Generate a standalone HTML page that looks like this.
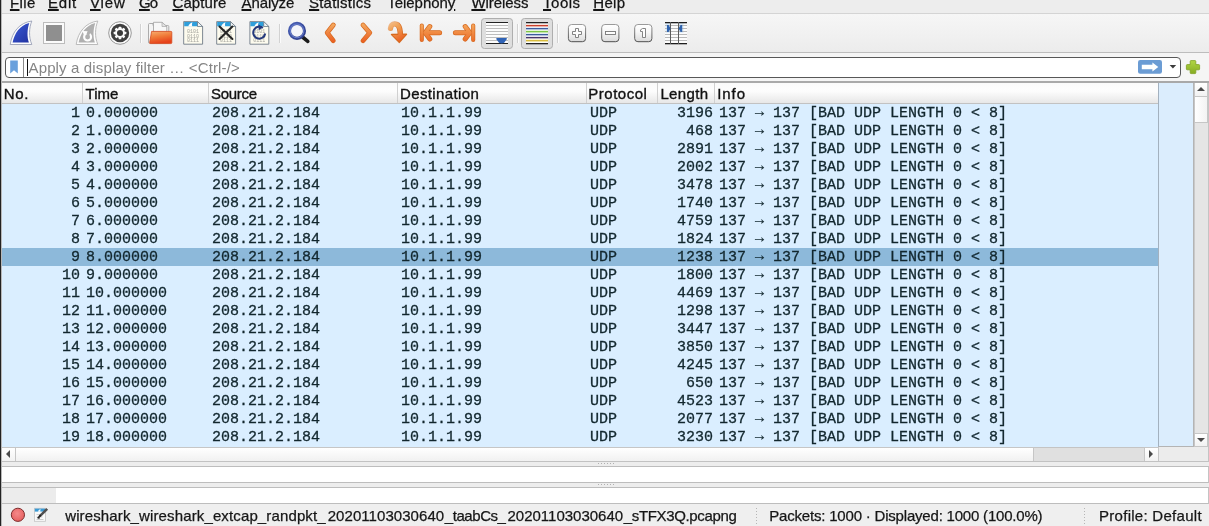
<!DOCTYPE html><html><head><meta charset="utf-8"><title>Wireshark</title><style>
*{box-sizing:border-box;margin:0;padding:0}
html,body{width:1209px;height:526px;overflow:hidden;background:#efefef}
body{position:relative;font-family:"Liberation Sans","DejaVu Sans",sans-serif;color:#1a1a1a}
.abs{position:absolute}
#wrap{position:absolute;left:0;top:0;width:1209px;height:526px;will-change:transform}
#lb{left:0;top:0;width:2px;height:526px;background:#b8b8b8;border-left:1px solid #222}
#menubar{left:2px;top:0;width:1207px;height:13px;background:#ededed;overflow:hidden}
#menuline{left:2px;top:13px;width:1207px;height:1px;background:#d4d4d4}
.mi{position:absolute;top:-6px;font-size:15px;line-height:18px;white-space:nowrap;color:#141414;-webkit-text-stroke:0.25px #141414}
.mi u{text-decoration:underline;text-decoration-thickness:1.6px;text-underline-offset:1.4px}
#toolbar{left:2px;top:14px;width:1207px;height:38px;background:linear-gradient(#f6f6f6,#ececec)}
#tbline{left:2px;top:52px;width:1207px;height:1px;background:#bdbdbd}
#filterarea{left:2px;top:53px;width:1207px;height:28px;background:#f5f5f5}
#filter{left:5px;top:57px;width:1176px;height:21px;background:#fff;border:1px solid #585858;border-radius:4px}
#fdiv{left:23px;top:58px;width:1px;height:19px;background:#8a8a8a}
#cursor{left:27px;top:59px;width:1px;height:17px;background:#111}
#ph{top:57px;height:21px;line-height:21px;font-size:15px;color:#858585;white-space:nowrap}
#tabletop{left:2px;top:81px;width:1207px;height:2px;background:#a9a9a9}
#header{left:2px;top:83px;width:1157px;height:20px;background:linear-gradient(#fafafa 0%,#fdfdfd 40%,#e7e7e7 100%)}
#headline{left:2px;top:103px;width:1157px;height:1px;background:#c2c2c2}
.hc{position:absolute;top:84px;height:20px;line-height:20px;font-size:15px;color:#111;white-space:nowrap;-webkit-text-stroke:0.35px #111}
.hd{position:absolute;top:83px;width:1px;height:20px;background:#d0d0d0}
#rows{left:2px;top:104px;width:1157px;height:343px;background:#daeeff}
.row{position:absolute;left:0;width:1157px;height:18px;font-family:"Liberation Mono","DejaVu Sans Mono",monospace;font-size:15px;line-height:18px;color:#12272e;white-space:pre;-webkit-text-stroke:0.3px #12272e}
.row.sel{background:#8db9da}
.row span{position:absolute;top:1px}
.row i{font-style:normal;position:relative;top:-1px}

#mini{left:1158px;top:83px;width:36px;height:364px;background:#dbedfd;border-left:1px solid #a3b1bf;border-right:1px solid #b4b4b4;border-bottom:1px solid #b4b4b4}
#vsb{left:1194px;top:83px;width:14px;height:364px;background:#e5e5e5;border-left:1px solid #c9c9c9}
#vsbr{left:1208px;top:83px;width:1px;height:379px;background:#c4c4c4}
#vup{left:1194px;top:83px;width:14px;height:14px;background:linear-gradient(#ffffff,#f2f2f2);border:1px solid #c6c6c6;border-top:none}
#vhandle{left:1194px;top:96px;width:14px;height:27px;background:linear-gradient(90deg,#ffffff,#f3f3f3);border:1px solid #c6c6c6}
#vdown{left:1194px;top:433px;width:14px;height:14px;background:linear-gradient(#ffffff,#f2f2f2);border:1px solid #c6c6c6}
.tri{position:absolute;width:0;height:0}
#rowsline{left:2px;top:447px;width:1157px;height:1px;background:#c4c4c4}
#hsb{left:2px;top:448px;width:1157px;height:13px;background:#e0e0e0}
#hleft{left:2px;top:447px;width:14px;height:15px;background:linear-gradient(#ffffff,#f2f2f2);border:1px solid #c6c6c6;border-left:none}
#hhandle{left:15px;top:447px;width:1019px;height:15px;background:linear-gradient(#ffffff,#f1f1f1);border:1px solid #c6c6c6}
#hright{left:1144px;top:447px;width:15px;height:15px;background:linear-gradient(#ffffff,#f2f2f2);border:1px solid #c6c6c6}
#corner{left:1159px;top:447px;width:49px;height:14px;background:#ececec}
#l461{left:2px;top:461px;width:1207px;height:1px;background:#c2c2c2}
#gap1{left:2px;top:462px;width:1207px;height:4px;background:#ededed}
#pane2{left:2px;top:466px;width:1207px;height:17px;background:#fff;border-top:1px solid #bdbdbd;border-bottom:1px solid #bdbdbd;border-right:1px solid #c4c4c4}
#gap2{left:2px;top:483px;width:1207px;height:4px;background:#ededed}
#pane3{left:2px;top:487px;width:1207px;height:17px;background:#fff;border-top:1px solid #bdbdbd;border-bottom:1px solid #bdbdbd;border-right:1px solid #c4c4c4}
#pane3g{left:2px;top:488px;width:54px;height:15px;background:#ececec}
.dots{position:absolute;width:16px;height:1px;left:598px;background:repeating-linear-gradient(90deg,#b0b0b0 0,#b0b0b0 1px,transparent 1px,transparent 3px)}
#status{left:2px;top:504px;width:1207px;height:22px;background:#efefef}
.st{position:absolute;top:505px;height:22px;line-height:22px;font-size:15px;color:#161616;white-space:nowrap;-webkit-text-stroke:0.25px #161616}
.vdot{position:absolute;top:508px;width:1px;height:16px;background:repeating-linear-gradient(180deg,#b5b5b5 0,#b5b5b5 1px,transparent 1px,transparent 3px)}
</style></head><body><div id="wrap">
<div id="lb" class="abs"></div>
<div id="menubar" class="abs">
<div class="mi" style="left:7.90px;letter-spacing:0.424px"><u>F</u>ile</div>
<div class="mi" style="left:46.00px;letter-spacing:0.773px"><u>E</u>dit</div>
<div class="mi" style="left:88.00px;letter-spacing:0.864px"><u>V</u>iew</div>
<div class="mi" style="left:137.00px;letter-spacing:-0.867px"><u>G</u>o</div>
<div class="mi" style="left:170.50px;letter-spacing:0.080px"><u>C</u>apture</div>
<div class="mi" style="left:239.50px;letter-spacing:-0.087px"><u>A</u>nalyze</div>
<div class="mi" style="left:307.00px;letter-spacing:0.209px"><u>S</u>tatistics</div>
<div class="mi" style="left:385.30px;letter-spacing:-0.048px">Telephon<u>y</u></div>
<div class="mi" style="left:469.40px;letter-spacing:-0.057px"><u>W</u>ireless</div>
<div class="mi" style="left:541.00px;letter-spacing:0.521px"><u>T</u>ools</div>
<div class="mi" style="left:591.20px;letter-spacing:0.364px"><u>H</u>elp</div>
</div><div id="menuline" class="abs"></div>
<div id="toolbar" class="abs"></div><div id="tbline" class="abs"></div>
<!--ICONS-->
<div id="filterarea" class="abs"></div><div id="filter" class="abs"></div><div id="fdiv" class="abs"></div><div id="cursor" class="abs"></div>
<div id="ph" class="abs" style="left:28.50px;letter-spacing:0.141px">Apply a display filter … &lt;Ctrl-/&gt;</div>
<!--FILTERICONS-->
<div id="tabletop" class="abs"></div><div id="header" class="abs"></div><div id="headline" class="abs"></div>
<div class="hc" style="left:3.80px;letter-spacing:0.663px">No.</div>
<div class="hc" style="left:85.60px;letter-spacing:-0.045px">Time</div>
<div class="hc" style="left:211.00px;letter-spacing:-0.277px">Source</div>
<div class="hc" style="left:400.00px;letter-spacing:0.370px">Destination</div>
<div class="hc" style="left:588.30px;letter-spacing:0.501px">Protocol</div>
<div class="hc" style="left:660.40px;letter-spacing:0.353px">Length</div>
<div class="hc" style="left:717.30px;letter-spacing:0.908px">Info</div>
<div class="hd" style="left:82px"></div>
<div class="hd" style="left:208px"></div>
<div class="hd" style="left:397px"></div>
<div class="hd" style="left:586px"></div>
<div class="hd" style="left:657px"></div>
<div class="hd" style="left:714px"></div>
<div id="rows" class="abs">
<div class="row" style="top:0px"><span style="right:1079px">1</span><span style="left:84px">0.000000</span><span style="left:210px">208.21.2.184</span><span style="left:399px">10.1.1.99</span><span style="left:588px">UDP</span><span style="right:446px">3196</span><span style="left:717px">137 <i>→</i> 137 [BAD UDP LENGTH 0 &lt; 8]</span></div>
<div class="row" style="top:18px"><span style="right:1079px">2</span><span style="left:84px">1.000000</span><span style="left:210px">208.21.2.184</span><span style="left:399px">10.1.1.99</span><span style="left:588px">UDP</span><span style="right:446px">468</span><span style="left:717px">137 <i>→</i> 137 [BAD UDP LENGTH 0 &lt; 8]</span></div>
<div class="row" style="top:36px"><span style="right:1079px">3</span><span style="left:84px">2.000000</span><span style="left:210px">208.21.2.184</span><span style="left:399px">10.1.1.99</span><span style="left:588px">UDP</span><span style="right:446px">2891</span><span style="left:717px">137 <i>→</i> 137 [BAD UDP LENGTH 0 &lt; 8]</span></div>
<div class="row" style="top:54px"><span style="right:1079px">4</span><span style="left:84px">3.000000</span><span style="left:210px">208.21.2.184</span><span style="left:399px">10.1.1.99</span><span style="left:588px">UDP</span><span style="right:446px">2002</span><span style="left:717px">137 <i>→</i> 137 [BAD UDP LENGTH 0 &lt; 8]</span></div>
<div class="row" style="top:72px"><span style="right:1079px">5</span><span style="left:84px">4.000000</span><span style="left:210px">208.21.2.184</span><span style="left:399px">10.1.1.99</span><span style="left:588px">UDP</span><span style="right:446px">3478</span><span style="left:717px">137 <i>→</i> 137 [BAD UDP LENGTH 0 &lt; 8]</span></div>
<div class="row" style="top:90px"><span style="right:1079px">6</span><span style="left:84px">5.000000</span><span style="left:210px">208.21.2.184</span><span style="left:399px">10.1.1.99</span><span style="left:588px">UDP</span><span style="right:446px">1740</span><span style="left:717px">137 <i>→</i> 137 [BAD UDP LENGTH 0 &lt; 8]</span></div>
<div class="row" style="top:108px"><span style="right:1079px">7</span><span style="left:84px">6.000000</span><span style="left:210px">208.21.2.184</span><span style="left:399px">10.1.1.99</span><span style="left:588px">UDP</span><span style="right:446px">4759</span><span style="left:717px">137 <i>→</i> 137 [BAD UDP LENGTH 0 &lt; 8]</span></div>
<div class="row" style="top:126px"><span style="right:1079px">8</span><span style="left:84px">7.000000</span><span style="left:210px">208.21.2.184</span><span style="left:399px">10.1.1.99</span><span style="left:588px">UDP</span><span style="right:446px">1824</span><span style="left:717px">137 <i>→</i> 137 [BAD UDP LENGTH 0 &lt; 8]</span></div>
<div class="row sel" style="top:144px"><span style="right:1079px">9</span><span style="left:84px">8.000000</span><span style="left:210px">208.21.2.184</span><span style="left:399px">10.1.1.99</span><span style="left:588px">UDP</span><span style="right:446px">1238</span><span style="left:717px">137 <i>→</i> 137 [BAD UDP LENGTH 0 &lt; 8]</span></div>
<div class="row" style="top:162px"><span style="right:1079px">10</span><span style="left:84px">9.000000</span><span style="left:210px">208.21.2.184</span><span style="left:399px">10.1.1.99</span><span style="left:588px">UDP</span><span style="right:446px">1800</span><span style="left:717px">137 <i>→</i> 137 [BAD UDP LENGTH 0 &lt; 8]</span></div>
<div class="row" style="top:180px"><span style="right:1079px">11</span><span style="left:84px">10.000000</span><span style="left:210px">208.21.2.184</span><span style="left:399px">10.1.1.99</span><span style="left:588px">UDP</span><span style="right:446px">4469</span><span style="left:717px">137 <i>→</i> 137 [BAD UDP LENGTH 0 &lt; 8]</span></div>
<div class="row" style="top:198px"><span style="right:1079px">12</span><span style="left:84px">11.000000</span><span style="left:210px">208.21.2.184</span><span style="left:399px">10.1.1.99</span><span style="left:588px">UDP</span><span style="right:446px">1298</span><span style="left:717px">137 <i>→</i> 137 [BAD UDP LENGTH 0 &lt; 8]</span></div>
<div class="row" style="top:216px"><span style="right:1079px">13</span><span style="left:84px">12.000000</span><span style="left:210px">208.21.2.184</span><span style="left:399px">10.1.1.99</span><span style="left:588px">UDP</span><span style="right:446px">3447</span><span style="left:717px">137 <i>→</i> 137 [BAD UDP LENGTH 0 &lt; 8]</span></div>
<div class="row" style="top:234px"><span style="right:1079px">14</span><span style="left:84px">13.000000</span><span style="left:210px">208.21.2.184</span><span style="left:399px">10.1.1.99</span><span style="left:588px">UDP</span><span style="right:446px">3850</span><span style="left:717px">137 <i>→</i> 137 [BAD UDP LENGTH 0 &lt; 8]</span></div>
<div class="row" style="top:252px"><span style="right:1079px">15</span><span style="left:84px">14.000000</span><span style="left:210px">208.21.2.184</span><span style="left:399px">10.1.1.99</span><span style="left:588px">UDP</span><span style="right:446px">4245</span><span style="left:717px">137 <i>→</i> 137 [BAD UDP LENGTH 0 &lt; 8]</span></div>
<div class="row" style="top:270px"><span style="right:1079px">16</span><span style="left:84px">15.000000</span><span style="left:210px">208.21.2.184</span><span style="left:399px">10.1.1.99</span><span style="left:588px">UDP</span><span style="right:446px">650</span><span style="left:717px">137 <i>→</i> 137 [BAD UDP LENGTH 0 &lt; 8]</span></div>
<div class="row" style="top:288px"><span style="right:1079px">17</span><span style="left:84px">16.000000</span><span style="left:210px">208.21.2.184</span><span style="left:399px">10.1.1.99</span><span style="left:588px">UDP</span><span style="right:446px">4523</span><span style="left:717px">137 <i>→</i> 137 [BAD UDP LENGTH 0 &lt; 8]</span></div>
<div class="row" style="top:306px"><span style="right:1079px">18</span><span style="left:84px">17.000000</span><span style="left:210px">208.21.2.184</span><span style="left:399px">10.1.1.99</span><span style="left:588px">UDP</span><span style="right:446px">2077</span><span style="left:717px">137 <i>→</i> 137 [BAD UDP LENGTH 0 &lt; 8]</span></div>
<div class="row" style="top:324px"><span style="right:1079px">19</span><span style="left:84px">18.000000</span><span style="left:210px">208.21.2.184</span><span style="left:399px">10.1.1.99</span><span style="left:588px">UDP</span><span style="right:446px">3230</span><span style="left:717px">137 <i>→</i> 137 [BAD UDP LENGTH 0 &lt; 8]</span></div>
</div>

<div id="mini" class="abs"></div>
<div id="vsb" class="abs"></div><div id="vsbr" class="abs"></div>
<div id="vup" class="abs"></div><div id="vhandle" class="abs"></div><div id="vdown" class="abs"></div>
<div class="tri" style="left:1197px;top:87px;border-left:4px solid transparent;border-right:4px solid transparent;border-bottom:4px solid #4a4a4a"></div>
<div class="tri" style="left:1197px;top:438px;border-left:4px solid transparent;border-right:4px solid transparent;border-top:4px solid #4a4a4a"></div>
<div id="rowsline" class="abs"></div>
<div id="hsb" class="abs"></div><div id="hhandle" class="abs"></div><div id="hleft" class="abs"></div><div id="hright" class="abs"></div>
<div class="tri" style="left:6px;top:450px;border-top:4px solid transparent;border-bottom:4px solid transparent;border-right:4px solid #4a4a4a"></div>
<div class="tri" style="left:1149px;top:450px;border-top:4px solid transparent;border-bottom:4px solid transparent;border-left:4px solid #4a4a4a"></div>
<div id="corner" class="abs"></div>
<div id="l461" class="abs"></div><div id="gap1" class="abs"></div>
<div id="pane2" class="abs"></div><div id="gap2" class="abs"></div>
<div id="pane3" class="abs"></div><div id="pane3g" class="abs"></div>
<div class="dots" style="top:463px"></div><div class="dots" style="top:484px"></div>
<div id="status" class="abs"></div>
<!--STATUSICONS-->
<div class="st" style="left:65.20px;letter-spacing:0.132px">wireshark_wireshark_extcap_randpkt_</div><div class="st" style="left:327.70px;letter-spacing:0.059px">20201103030640</div><div class="st" style="left:444.80px;letter-spacing:-0.438px">_taabCs_</div><div class="st" style="left:507.50px;letter-spacing:-0.003px">20201103030640</div><div class="st" style="left:623.80px;letter-spacing:-0.348px">_sTFX3Q.pcapng</div>
<div class="st" style="left:769.30px;letter-spacing:-0.197px">Packets: 1000 · Displayed: 1000 (100.0%)</div>
<div class="st" style="left:1099.00px;letter-spacing:0.279px">Profile: Default</div>
<div class="vdot" style="left:756px"></div><div class="vdot" style="left:1084px"></div>

<svg class="abs" style="left:0;top:0" width="1209" height="526" viewBox="0 0 1209 526"><defs>
<linearGradient id="gBlue" x1="0" y1="0" x2="1" y2="1"><stop offset="0" stop-color="#3a5bd8"/><stop offset="1" stop-color="#2232a0"/></linearGradient>
<linearGradient id="gOr" gradientUnits="userSpaceOnUse" x1="0" y1="23" x2="0" y2="43"><stop offset="0" stop-color="#f4ad62"/><stop offset="1" stop-color="#ea5a1e"/></linearGradient>
<linearGradient id="gOrH" gradientUnits="userSpaceOnUse" x1="0" y1="24" x2="0" y2="42"><stop offset="0" stop-color="#f5a85c"/><stop offset="1" stop-color="#ec6a28"/></linearGradient>
<linearGradient id="gFold" x1="0" y1="0" x2="0.3" y2="1"><stop offset="0" stop-color="#f7b070"/><stop offset="0.5" stop-color="#f07a38"/><stop offset="1" stop-color="#e6411a"/></linearGradient>
<linearGradient id="gBtn" x1="0" y1="0" x2="0" y2="1"><stop offset="0" stop-color="#ffffff"/><stop offset="0.45" stop-color="#f6f6f6"/><stop offset="1" stop-color="#dadada"/></linearGradient>
<linearGradient id="gBtnS" x1="0" y1="0" x2="0" y2="1"><stop offset="0" stop-color="#9a9a9a"/><stop offset="1" stop-color="#4e4e4e"/></linearGradient>
<linearGradient id="gGreen" x1="0" y1="0" x2="0" y2="1"><stop offset="0" stop-color="#b2d644"/><stop offset="1" stop-color="#86ac22"/></linearGradient>
<radialGradient id="gRed" cx="0.45" cy="0.4" r="0.7"><stop offset="0" stop-color="#f58a8a"/><stop offset="1" stop-color="#e45a5a"/></radialGradient>
<linearGradient id="gJump" gradientUnits="userSpaceOnUse" x1="389" y1="22" x2="402" y2="43"><stop offset="0" stop-color="#f3c090"/><stop offset="0.35" stop-color="#f0a052"/><stop offset="1" stop-color="#ea561c"/></linearGradient><linearGradient id="gJumpB" gradientUnits="userSpaceOnUse" x1="389" y1="24" x2="398" y2="30"><stop offset="0" stop-color="#eebf98"/><stop offset="1" stop-color="#d6691f"/></linearGradient>
<linearGradient id="gRing" x1="0" y1="0" x2="1" y2="1"><stop offset="0" stop-color="#4a60b4"/><stop offset="1" stop-color="#2b3a8a"/></linearGradient>
</defs><g transform="translate(0,0)"><path d="M10.2,44.5 C12,32 19.5,22.6 31.8,21 C29,28 28.6,37 31.8,44.5 Z" fill="#fdfdfd" stroke="#9aa0b8" stroke-width="0.9" stroke-linejoin="round"/><path d="M12.6,42.6 C14.5,33 20,25.2 29.3,22.9 C27,29.5 27,37 28.9,42.6 Z" fill="url(#gBlue)"/></g><rect x="43.5" y="22.5" width="21" height="21" fill="#fbfbfb" stroke="#bcbcbc" stroke-width="1"/><rect x="46" y="25" width="16" height="16" fill="#8f8f8f"/><g transform="translate(66,0)"><path d="M10.2,44.5 C12,32 19.5,22.6 31.8,21 C29,28 28.6,37 31.8,44.5 Z" fill="#fdfdfd" stroke="#b4b4b4" stroke-width="0.9" stroke-linejoin="round"/><path d="M12.6,42.6 C14.5,33 20,25.2 29.3,22.9 C27,29.5 27,37 28.9,42.6 Z" fill="#b0b0b0"/><circle cx="21.6" cy="37" r="3.5" fill="none" stroke="#fdfdfd" stroke-width="2.1"/><path d="M16.5,31 L22.5,31.3 L18.3,36.2 Z" fill="#fdfdfd"/><rect x="21" y="31" width="3" height="4" fill="#b0b0b0" transform="rotate(20 22 33)"/></g><circle cx="120" cy="33" r="11.3" fill="#fcfcfc" stroke="#8e8e8e" stroke-width="0.9"/><circle cx="120" cy="33" r="9.2" fill="#3f3f3f"/><circle cx="120" cy="33" r="4.9" fill="#fafafa"/><rect x="118.7" y="26.7" width="2.6" height="3" rx="0.5" fill="#fafafa" transform="rotate(0 120 33)"/><rect x="118.7" y="26.7" width="2.6" height="3" rx="0.5" fill="#fafafa" transform="rotate(45 120 33)"/><rect x="118.7" y="26.7" width="2.6" height="3" rx="0.5" fill="#fafafa" transform="rotate(90 120 33)"/><rect x="118.7" y="26.7" width="2.6" height="3" rx="0.5" fill="#fafafa" transform="rotate(135 120 33)"/><rect x="118.7" y="26.7" width="2.6" height="3" rx="0.5" fill="#fafafa" transform="rotate(180 120 33)"/><rect x="118.7" y="26.7" width="2.6" height="3" rx="0.5" fill="#fafafa" transform="rotate(225 120 33)"/><rect x="118.7" y="26.7" width="2.6" height="3" rx="0.5" fill="#fafafa" transform="rotate(270 120 33)"/><rect x="118.7" y="26.7" width="2.6" height="3" rx="0.5" fill="#fafafa" transform="rotate(315 120 33)"/><circle cx="120" cy="33" r="3.0" fill="#3a3a3a"/><rect x="140" y="24" width="1" height="19" fill="#d2d2d2"/><rect x="141" y="24" width="1" height="19" fill="#fbfbfb"/><rect x="279" y="24" width="1" height="19" fill="#d2d2d2"/><rect x="280" y="24" width="1" height="19" fill="#fbfbfb"/><rect x="517" y="24" width="1" height="19" fill="#d2d2d2"/><rect x="518" y="24" width="1" height="19" fill="#fbfbfb"/><rect x="557" y="24" width="1" height="19" fill="#d2d2d2"/><rect x="558" y="24" width="1" height="19" fill="#fbfbfb"/><path d="M148.5,24.5 Q148.5,23.5 149.5,23.5 L153,23.5 L153,25.5 L167.8,25.5 Q168.8,25.5 168.8,26.5 L168.8,43 L149.5,43.3 Q148.5,43.3 148.5,42 Z" fill="#f4f4f4" stroke="#a4a4a4" stroke-width="0.9"/><path d="M153.5,22.3 L162,22.3 L166.8,26.5 L166.8,32 L153.5,32 Z" fill="#f7f7f7" stroke="#a8a8a8" stroke-width="0.9"/><path d="M162,22.3 L162,26.5 L166.8,26.5 Z" fill="#e4e4e4" stroke="#a8a8a8" stroke-width="0.7"/><path d="M151.6,31.4 L171,31.4 Q171.8,31.4 171.8,32.2 L171.8,42.6 Q171.8,43.6 170.8,43.6 L150.6,43.6 Q149.4,43.6 149.7,42.4 Z" fill="url(#gFold)" stroke="#d5481c" stroke-width="0.8"/><g transform="translate(183.2,0)"><path d="M0.5,21.6 L14.3,21.6 L19.4,26.5 L19.4,44.2 L0.5,44.2 Z" fill="#fdfbee" stroke="#707c88" stroke-width="0.9"/><path d="M1,22.1 L14,22.1 L18.2,26.3 L1,26.3 Z" fill="#2f9fdb"/><path d="M5,26.6 C5.5,24.6 7,23 9.3,22.3 C8.6,23.8 8.6,25.4 9.2,26.6 Z" fill="#fdfdfd"/><path d="M14.3,21.6 L14.3,26.5 L19.4,26.5 Z" fill="#eef3f6" stroke="#62707c" stroke-width="0.7"/><text x="3.8" y="33" font-family="Liberation Mono,monospace" font-size="4.6" fill="#a2a29c" textLength="12" lengthAdjust="spacingAndGlyphs">0101</text><text x="3.8" y="37.5" font-family="Liberation Mono,monospace" font-size="4.6" fill="#a2a29c" textLength="12" lengthAdjust="spacingAndGlyphs">0110</text><text x="3.8" y="42" font-family="Liberation Mono,monospace" font-size="4.6" fill="#a2a29c" textLength="12" lengthAdjust="spacingAndGlyphs">0111</text></g><g transform="translate(216.2,0)"><path d="M0.5,21.6 L14.3,21.6 L19.4,26.5 L19.4,44.2 L0.5,44.2 Z" fill="#fdfbee" stroke="#707c88" stroke-width="0.9"/><path d="M1,22.1 L14,22.1 L18.2,26.3 L1,26.3 Z" fill="#2f9fdb"/><path d="M5,26.6 C5.5,24.6 7,23 9.3,22.3 C8.6,23.8 8.6,25.4 9.2,26.6 Z" fill="#fdfdfd"/><path d="M14.3,21.6 L14.3,26.5 L19.4,26.5 Z" fill="#eef3f6" stroke="#62707c" stroke-width="0.7"/><text x="3.8" y="33" font-family="Liberation Mono,monospace" font-size="4.6" fill="#a2a29c" textLength="12" lengthAdjust="spacingAndGlyphs">0101</text><text x="3.8" y="37.5" font-family="Liberation Mono,monospace" font-size="4.6" fill="#a2a29c" textLength="12" lengthAdjust="spacingAndGlyphs">0110</text><text x="3.8" y="42" font-family="Liberation Mono,monospace" font-size="4.6" fill="#a2a29c" textLength="12" lengthAdjust="spacingAndGlyphs">0111</text><path d="M3.3,26.6 L16.2,39 M16.2,26.6 L3.3,39" stroke="#262626" stroke-width="2.1" stroke-linecap="round" fill="none"/></g><g transform="translate(249.4,0)"><path d="M0.5,21.6 L14.3,21.6 L19.4,26.5 L19.4,44.2 L0.5,44.2 Z" fill="#fdfbee" stroke="#707c88" stroke-width="0.9"/><path d="M1,22.1 L14,22.1 L18.2,26.3 L1,26.3 Z" fill="#2f9fdb"/><path d="M5,26.6 C5.5,24.6 7,23 9.3,22.3 C8.6,23.8 8.6,25.4 9.2,26.6 Z" fill="#fdfdfd"/><path d="M14.3,21.6 L14.3,26.5 L19.4,26.5 Z" fill="#eef3f6" stroke="#62707c" stroke-width="0.7"/><text x="3.8" y="33" font-family="Liberation Mono,monospace" font-size="4.6" fill="#a2a29c" textLength="12" lengthAdjust="spacingAndGlyphs">0101</text><text x="3.8" y="37.5" font-family="Liberation Mono,monospace" font-size="4.6" fill="#a2a29c" textLength="12" lengthAdjust="spacingAndGlyphs">0110</text><text x="3.8" y="42" font-family="Liberation Mono,monospace" font-size="4.6" fill="#a2a29c" textLength="12" lengthAdjust="spacingAndGlyphs">0111</text><path d="M13.5,27.9 A6 6 0 1 0 15.8,33.5" stroke="#24397c" stroke-width="2" fill="none"/><path d="M9,24.6 L13.6,27.2 L9.4,30.2 Z" fill="#24397c"/></g><path d="M302.5,37 L307.8,41.3" stroke="#1c1c1c" stroke-width="3.6" stroke-linecap="round"/><circle cx="297" cy="30.9" r="7.5" fill="#f3f4fa" stroke="url(#gRing)" stroke-width="3.1"/><circle cx="297" cy="30.9" r="6.9" fill="none" stroke="#7288d6" stroke-width="1" opacity="0.85"/><polyline points="333.3,25 327.2,32.8 333.3,40.7" fill="none" stroke="#d6691f" stroke-width="4.8" stroke-linecap="round" stroke-linejoin="round"/><polyline points="333.3,25 327.2,32.8 333.3,40.7" fill="none" stroke="url(#gOr)" stroke-width="3.4" stroke-linecap="round" stroke-linejoin="round"/><polyline points="363,25 369.8,32.8 363,40.7" fill="none" stroke="#d6691f" stroke-width="4.8" stroke-linecap="round" stroke-linejoin="round"/><polyline points="363,25 369.8,32.8 363,40.7" fill="none" stroke="url(#gOr)" stroke-width="3.4" stroke-linecap="round" stroke-linejoin="round"/><path d="M390.5,28.4 C390.8,22.8 397.8,22 399.6,28.4 C400.2,31 400.4,33 400.4,36" fill="none" stroke="url(#gJumpB)" stroke-width="5.4" stroke-linecap="round"/><path d="M391.6,34.5 L406.4,34.2 L399.3,42.3 Z" fill="url(#gJump)" stroke="#d6691f" stroke-width="1.6" stroke-linejoin="round"/><path d="M390.5,28.4 C390.8,22.8 397.8,22 399.6,28.4 C400.2,31 400.4,33 400.4,36" fill="none" stroke="url(#gJump)" stroke-width="4" stroke-linecap="round"/><path d="M392.4,35 L405.6,34.8 L399.3,41.6 Z" fill="url(#gJump)"/><g><g fill="none" stroke="#d6691f" stroke-width="5" stroke-linecap="round" stroke-linejoin="round"><path d="M421.8,25.6 L421.8,40" stroke-width="4.1"/><path d="M426,32.8 L439.6,32.8"/><path d="M429.8,26.6 L425.2,32.8 L429.8,39"/></g><g fill="none" stroke="url(#gOrH)" stroke-width="3.6" stroke-linecap="round" stroke-linejoin="round"><path d="M421.8,25.6 L421.8,40" stroke-width="2.7"/><path d="M426,32.8 L439.6,32.8"/><path d="M429.8,26.6 L425.2,32.8 L429.8,39"/></g></g><g transform="translate(895,0) scale(-1,1)"><g fill="none" stroke="#d6691f" stroke-width="5" stroke-linecap="round" stroke-linejoin="round"><path d="M421.8,25.6 L421.8,40" stroke-width="4.1"/><path d="M426,32.8 L439.6,32.8"/><path d="M429.8,26.6 L425.2,32.8 L429.8,39"/></g><g fill="none" stroke="url(#gOrH)" stroke-width="3.6" stroke-linecap="round" stroke-linejoin="round"><path d="M421.8,25.6 L421.8,40" stroke-width="2.7"/><path d="M426,32.8 L439.6,32.8"/><path d="M429.8,26.6 L425.2,32.8 L429.8,39"/></g></g><rect x="481.5" y="18.5" width="31" height="30" rx="3" fill="#dedede" stroke="#aeaeae" stroke-width="1"/><rect x="486" y="22" width="22" height="22" fill="#fcfcfc"/><rect x="486" y="22" width="22" height="1" fill="#222"/><rect x="486" y="25" width="22" height="1" fill="#bcbcbc"/><rect x="486" y="28" width="22" height="1" fill="#bcbcbc"/><rect x="486" y="31" width="22" height="1" fill="#bcbcbc"/><rect x="486" y="34" width="22" height="1" fill="#bcbcbc"/><rect x="486" y="37" width="22" height="1" fill="#bcbcbc"/><rect x="486" y="40" width="22" height="1" fill="#bcbcbc"/><rect x="486" y="43" width="22" height="1" fill="#222"/><path d="M496,38.7 Q496.4,38 497.4,38 L505.8,38 Q506.9,38 507.1,38.8 L504.2,42.8 Q501.6,44.2 499,42.8 Z" fill="#2f63b6"/><rect x="521.5" y="18.5" width="31" height="30" rx="3" fill="#dedede" stroke="#aeaeae" stroke-width="1"/><rect x="526" y="22" width="22" height="22" fill="#fcfcfc"/><rect x="526" y="24" width="22" height="3" fill="#fbe3dc"/><rect x="526" y="27" width="22" height="3" fill="#e4ecf8"/><rect x="526" y="30" width="22" height="3" fill="#e6f6da"/><rect x="526" y="33" width="22" height="3" fill="#e4ecf8"/><rect x="526" y="36" width="22" height="3" fill="#ebe6f2"/><rect x="526" y="39" width="22" height="3" fill="#fbf5d2"/><rect x="526" y="22" width="22" height="1.3" fill="#222"/><rect x="526" y="25" width="22" height="1.3" fill="#c8402c"/><rect x="526" y="28" width="22" height="1.3" fill="#3d5c9c"/><rect x="526" y="31" width="22" height="1.3" fill="#7fc447"/><rect x="526" y="34" width="22" height="1.3" fill="#3d5c9c"/><rect x="526" y="37" width="22" height="1.3" fill="#4a3866"/><rect x="526" y="40" width="22" height="1.3" fill="#d8bb3c"/><rect x="526" y="43" width="22" height="1.3" fill="#222"/><rect x="568.4" y="24.5" width="17.2" height="17.2" rx="3.2" fill="url(#gBtn)" stroke="url(#gBtnS)" stroke-width="1"/><path d="M575.5,28.5 h3 v3 h3 v3 h-3 v3 h-3 v-3 h-3 v-3 h3 Z" fill="#fdfdfd" stroke="#767676" stroke-width="0.9"/><rect x="601.7" y="24.5" width="17.2" height="17.2" rx="3.2" fill="url(#gBtn)" stroke="url(#gBtnS)" stroke-width="1"/><rect x="605.5" y="31.5" width="10" height="3" fill="#fdfdfd" stroke="#767676" stroke-width="0.9"/><rect x="634.7" y="24.5" width="17.2" height="17.2" rx="3.2" fill="url(#gBtn)" stroke="url(#gBtnS)" stroke-width="1"/><path d="M642.5,28.5 h3 v9 h-3 v-6 h-2 v-1.6 Z" fill="#fdfdfd" stroke="#767676" stroke-width="0.9" stroke-linejoin="round"/><rect x="665" y="22" width="22" height="22" fill="#fcfcfc"/><rect x="665.5" y="23.3" width="4.5" height="9.4" fill="#d6e9f8"/><rect x="679" y="23.3" width="4.5" height="9.4" fill="#d6e9f8"/><rect x="665" y="22" width="22" height="1.3" fill="#1e1e1e"/><rect x="665" y="25" width="22" height="1" fill="#b8b8b8"/><rect x="665" y="28" width="22" height="1" fill="#b8b8b8"/><rect x="665" y="31" width="22" height="1" fill="#b8b8b8"/><rect x="665" y="34" width="22" height="1" fill="#b8b8b8"/><rect x="665" y="37" width="22" height="1" fill="#b8b8b8"/><rect x="665" y="40" width="22" height="1" fill="#b8b8b8"/><rect x="665" y="43" width="22" height="1.3" fill="#1e1e1e"/><rect x="670" y="22" width="1" height="22" fill="#5c5c5c"/><rect x="678" y="22" width="1" height="22" fill="#5c5c5c"/><path d="M667,25 L668.6,25 L670.6,28.5 L668.6,32 L667,32 Z" fill="#2f62ad"/><path d="M682.2,25 L680.6,25 L678.6,28.5 L680.6,32 L682.2,32 Z" fill="#2f62ad"/><path d="M10.2,60.4 L17.8,60.4 L17.8,73.6 L14,70.2 L10.2,73.6 Z" fill="#6aa0dc"/><rect x="1138" y="60" width="24" height="13.8" rx="2.2" fill="#6b9cd4"/><path d="M1141.8,64.8 L1152.4,64.8 L1152.4,62.6 L1158.3,67 L1152.4,71.4 L1152.4,69.2 L1141.8,69.2 Z" fill="#fff"/><path d="M1169.6,65 L1176.2,65 L1172.9,68.6 Z" fill="#3c3c3c"/><path d="M1191,60.6 h4 q0.8,0 0.8,0.8 v3.2 h3 q0.8,0 0.8,0.8 v3.6 q0,0.8 -0.8,0.8 h-3 v3 q0,0.8 -0.8,0.8 h-4 q-0.8,0 -0.8,-0.8 v-3 h-3 q-0.8,0 -0.8,-0.8 v-3.6 q0,-0.8 0.8,-0.8 h3 v-3.2 q0,-0.8 0.8,-0.8 Z" fill="url(#gGreen)" stroke="#7f9f22" stroke-width="0.8"/><circle cx="17.9" cy="514.8" r="6.6" fill="url(#gRed)" stroke="#7c2c2c" stroke-width="1"/><rect x="34.4" y="508.3" width="11" height="13" fill="#fafafa" stroke="#c4c4c4" stroke-width="0.8"/><rect x="34.8" y="508.6" width="10.2" height="3" fill="#3a9ad4"/><path d="M38,511.8 C38.3,510.4 39.2,509.4 40.6,509 C40.2,510 40.2,511 40.5,511.8 Z" fill="#f4fbff"/><rect x="36.5" y="514" width="5" height="0.8" fill="#c8c8c8"/><rect x="36.5" y="516.6" width="6" height="0.8" fill="#c8c8c8"/><rect x="36.5" y="519.2" width="7" height="0.8" fill="#c0c0c0"/><path d="M47.2,508.8 L39.6,516.4" stroke="#505050" stroke-width="2.5" stroke-linecap="butt"/><path d="M40.2,515.6 L38.3,517.7 L39,518" stroke="#222" stroke-width="1.6" stroke-linecap="round" fill="none"/></svg>
</div></body></html>
